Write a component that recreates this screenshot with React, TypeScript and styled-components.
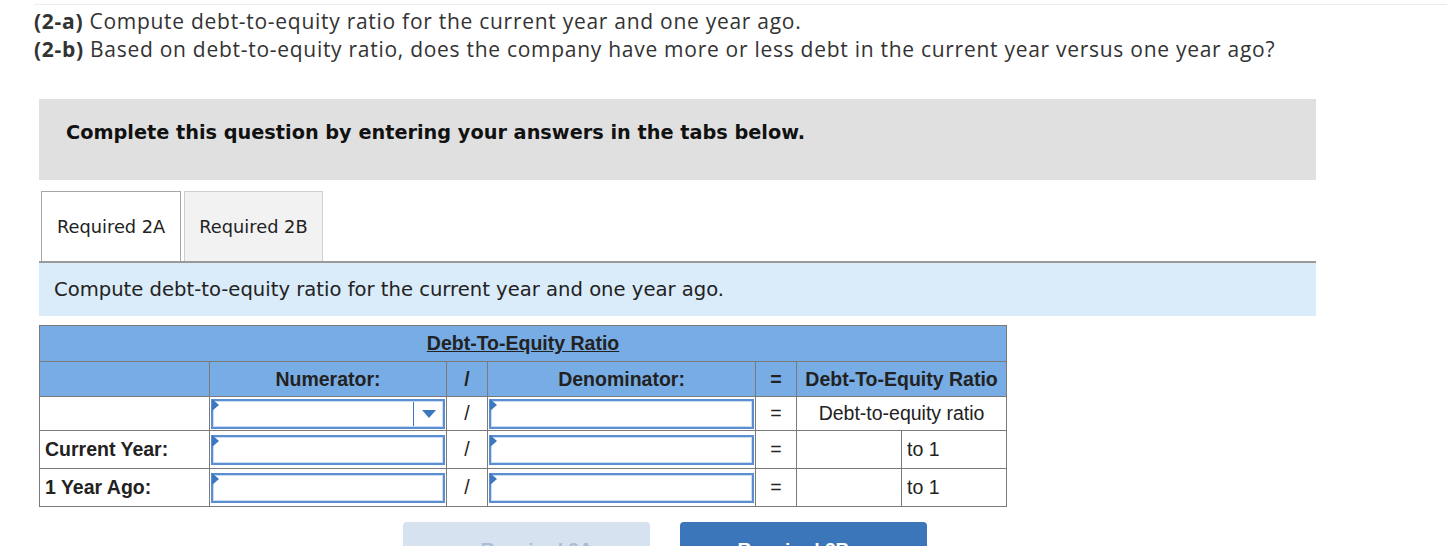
import React from 'react';
import styled, { createGlobalStyle } from 'styled-components';

const GlobalStyle = createGlobalStyle`
  body {
    margin: 0;
    background: #fff;
  }
`;

const Page = styled.div`
  padding: 4px 0 0 34px;
  width: 1413px;
  height: 542px;
  overflow: hidden;
`;

const TopRule = styled.div`
  border-top: 1px solid #ececec;
`;

const Heading = styled.div`
  margin-top: 2px;
  font-family: 'Open Sans', 'Lato', sans-serif;
  font-size: 21px;
  letter-spacing: 0.72px;
  line-height: 28px;
  color: #333;
`;

const Strong = styled.b`
  font-weight: 700;
`;

const Body = styled.div`
  margin: 36px 0 0 5px;
  width: 1277px;
`;

const InfoBox = styled.div`
  height: 81px;
  box-sizing: border-box;
  background: #e0e0e0;
  display: flex;
  align-items: center;
  padding: 0 0 14px 27px;
  font-family: 'DejaVu Sans', Verdana, sans-serif;
  font-weight: 700;
  font-size: 19.3px;
  color: #111;
`;

const Tabs = styled.div`
  display: flex;
  gap: 3px;
  margin: 11px 0 0 2px;
`;

const Tab = styled.div<{ $active?: boolean }>`
  height: 70px;
  box-sizing: border-box;
  padding: 0 ${p => (p.$active ? 15 : 14)}px;
  display: flex;
  align-items: center;
  border: 1px solid ${p => (p.$active ? '#a6a6a6' : '#cfcfcf')};
  border-bottom: none;
  background: ${p => (p.$active ? '#fff' : '#f2f2f2')};
  font-family: 'DejaVu Sans', Verdana, sans-serif;
  font-size: 17.8px;
  color: #222;
`;

const Prompt = styled.div`
  height: 55px;
  box-sizing: border-box;
  border-top: 2px solid #9a9a9a;
  background: #daebf9;
  display: flex;
  align-items: center;
  padding-left: 15px;
  font-family: 'DejaVu Sans', Verdana, sans-serif;
  font-size: 19.6px;
  color: #222;
`;

const Table = styled.table`
  margin-top: 9px;
  border-collapse: collapse;
  table-layout: fixed;
  width: 967px;
  font-family: 'Liberation Sans', Arial, sans-serif;
  font-size: 19.5px;
  color: #222;
`;

const Cell = styled.td<{ $h?: number; $align?: string; $bold?: boolean; $head?: boolean }>`
  border: 1px solid #7a7a7a;
  height: ${p => p.$h ?? 34}px;
  padding: 0 ${p => (p.$align === 'left' ? 5 : 0)}px;
  box-sizing: border-box;
  text-align: ${p => p.$align ?? 'center'};
  font-weight: ${p => (p.$bold ? 700 : 400)};
  background: ${p => (p.$head ? '#78ace4' : '#fff')};
  vertical-align: middle;
`;

const InputCell = styled.td`
  border: 1px solid #7a7a7a;
  padding: 1px;
  box-sizing: border-box;
`;

const InputBox = styled.div`
  position: relative;
  height: 100%;
  min-height: 30px;
  box-sizing: border-box;
  border: 2px solid #5b8ed0;
  box-shadow: inset 0 0 0 1px #c9dcf2;
  background: #fff;
`;

const Flag = styled.span`
  position: absolute;
  left: -1px;
  top: -1px;
  width: 0;
  height: 0;
  border-top: 6px solid transparent;
  border-bottom: 6px solid transparent;
  border-left: 7px solid #3b78bf;
  transform: translateY(-1px);
`;

const Caret = styled.span`
  position: absolute;
  right: 0;
  top: 1px;
  bottom: 1px;
  width: 29px;
  border-left: 1px solid #3b78bf;
  display: flex;
  align-items: center;
  justify-content: center;
`;

const Underlined = styled.span`
  text-decoration: underline;
`;

const Buttons = styled.div`
  display: flex;
  gap: 30px;
  margin: 15px 0 0 364px;
`;

const NavButton = styled.div<{ $primary?: boolean }>`
  width: 247px;
  height: 44px;
  border-radius: 4px 4px 0 0;
  background: ${p => (p.$primary ? '#3a76b9' : '#d7e2f0')};
  color: ${p => (p.$primary ? '#fff' : '#a9bdd6')};
  display: flex;
  align-items: center;
  justify-content: center;
  gap: 14px;
  padding-top: 12px;
  box-sizing: border-box;
  font-family: 'Liberation Sans', Arial, sans-serif;
  font-weight: 700;
  font-size: 19px;
`;

const Input: React.FC<{ dropdown?: boolean }> = ({ dropdown }) => (
  <InputBox>
    <Flag />
    {dropdown && (
      <Caret>
        <svg width="14" height="8" viewBox="0 0 14 8">
          <path d="M0 0 L14 0 L7 8 Z" fill="#3b78bf" />
        </svg>
      </Caret>
    )}
  </InputBox>
);

const rows = [
  { label: 'Current Year:', h: 38 },
  { label: '1 Year Ago:', h: 38 },
];

const App: React.FC = () => (
  <>
    <GlobalStyle />
    <Page>
      <TopRule />
      <Heading>
        <div>
          <Strong>(2-a)</Strong> Compute debt-to-equity ratio for the current year and one year ago.
        </div>
        <div>
          <Strong>(2-b)</Strong> Based on debt-to-equity ratio, does the company have more or less debt in the current year versus one year ago?
        </div>
      </Heading>
      <Body>
        <InfoBox>Complete this question by entering your answers in the tabs below.</InfoBox>
        <Tabs>
          <Tab $active>Required 2A</Tab>
          <Tab>Required 2B</Tab>
        </Tabs>
        <Prompt>Compute debt-to-equity ratio for the current year and one year ago.</Prompt>
        <Table>
          <colgroup>
            <col style={{ width: 170 }} />
            <col style={{ width: 237 }} />
            <col style={{ width: 41 }} />
            <col style={{ width: 268 }} />
            <col style={{ width: 41 }} />
            <col style={{ width: 105 }} />
            <col style={{ width: 105 }} />
          </colgroup>
          <tbody>
            <tr>
              <Cell $head $bold $h={36} colSpan={7}>
                <Underlined>Debt-To-Equity Ratio</Underlined>
              </Cell>
            </tr>
            <tr>
              <Cell $head $h={35} />
              <Cell $head $bold>Numerator:</Cell>
              <Cell $head $bold>/</Cell>
              <Cell $head $bold>Denominator:</Cell>
              <Cell $head $bold>=</Cell>
              <Cell $head $bold colSpan={2}>Debt-To-Equity Ratio</Cell>
            </tr>
            <tr>
              <Cell $h={34} />
              <InputCell><Input dropdown /></InputCell>
              <Cell>/</Cell>
              <InputCell><Input /></InputCell>
              <Cell>=</Cell>
              <Cell colSpan={2}>Debt-to-equity ratio</Cell>
            </tr>
            {rows.map(r => (
              <tr key={r.label}>
                <Cell $h={r.h} $align="left" $bold>{r.label}</Cell>
                <InputCell><Input /></InputCell>
                <Cell>/</Cell>
                <InputCell><Input /></InputCell>
                <Cell>=</Cell>
                <Cell />
                <Cell $align="left">to 1</Cell>
              </tr>
            ))}
          </tbody>
        </Table>
        <Buttons>
          <NavButton>
            <span>‹</span>
            <span>Required 2A</span>
          </NavButton>
          <NavButton $primary>
            <span>Required 2B</span>
            <span>›</span>
          </NavButton>
        </Buttons>
      </Body>
    </Page>
  </>
);

export default App;
